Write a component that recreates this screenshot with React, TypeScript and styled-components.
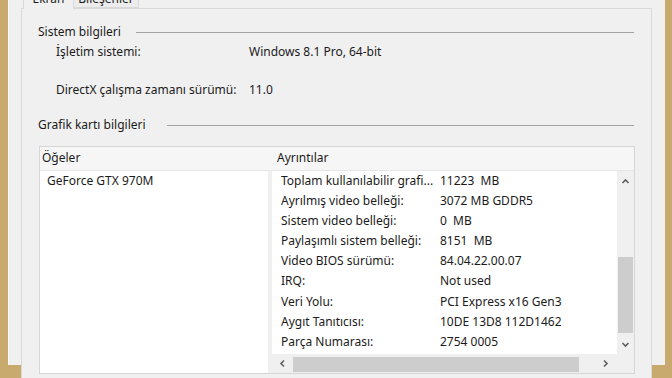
import React from "react";
import styled, { createGlobalStyle } from "styled-components";

const GlobalStyle = createGlobalStyle`
  html, body {
    margin: 0;
    padding: 0;
    background: #c8aa6f;
  }
  * {
    box-sizing: border-box;
  }
`;

const details: [string, string][] = [
  ["Toplam kullanılabilir grafi...", "11223  MB"],
  ["Ayrılmış video belleği:", "3072 MB GDDR5"],
  ["Sistem video belleği:", "0  MB"],
  ["Paylaşımlı sistem belleği:", "8151  MB"],
  ["Video BIOS sürümü:", "84.04.22.00.07"],
  ["IRQ:", "Not used"],
  ["Veri Yolu:", "PCI Express x16 Gen3"],
  ["Aygıt Tanıtıcısı:", "10DE 13D8 112D1462"],
  ["Parça Numarası:", "2754 0005"],
];

function Chevron({ dir }: { dir: "up" | "down" | "left" | "right" }) {
  const rot = { up: 0, right: 90, down: 180, left: 270 }[dir];
  return (
    <svg width="9" height="9" viewBox="0 0 9 9">
      <path
        d="M1.5 6 L4.5 3 L7.5 6"
        fill="none"
        stroke="#5f5f5f"
        strokeWidth="1.6"
        transform={`rotate(${rot} 4.5 4.5)`}
      />
    </svg>
  );
}

function App() {
  return (
    <Frame>
      <GlobalStyle />
      <Window>
        <TabStrip>
          <Tab $active $w={51}>Ekran</Tab>
          <Tab $w={66}>Bileşenler</Tab>
        </TabStrip>
        <Panel>
          <GroupHeader>
            <span>Sistem bilgileri</span>
            <GroupLine $gap={15} />
          </GroupHeader>
          <InfoRow>
            <InfoLabel>İşletim sistemi:</InfoLabel>
            <span>Windows 8.1 Pro, 64-bit</span>
          </InfoRow>
          <InfoRow $top={14}>
            <InfoLabel>DirectX çalışma zamanı sürümü:</InfoLabel>
            <span>11.0</span>
          </InfoRow>
          <GroupHeader $top={15}>
            <span>Grafik kartı bilgileri</span>
            <GroupLine $gap={21} />
          </GroupHeader>

          <ListBox>
            <ListHeader>
              <HeaderCell $pad={2}>Öğeler</HeaderCell>
              <span />
              <HeaderCell $pad={5}>Ayrıntılar</HeaderCell>
            </ListHeader>
            <ListBody>
              <ItemColumn>
                <ItemRow>GeForce GTX 970M</ItemRow>
              </ItemColumn>
              <Splitter />
              <DetailPane>
                <DetailRows>
                  {details.map(([k, v]) => (
                    <DetailRow key={k}>
                      <DetailKey>{k}</DetailKey>
                      <DetailValue>{v}</DetailValue>
                    </DetailRow>
                  ))}
                </DetailRows>
                <VScroll>
                  <ScrollButton $h={20}>
                    <Chevron dir="up" />
                  </ScrollButton>
                  <VTrack>
                    <VThumb />
                  </VTrack>
                  <ScrollButton $h={20}>
                    <Chevron dir="down" />
                  </ScrollButton>
                </VScroll>
                <HScroll>
                  <ScrollButton $w={21}>
                    <Chevron dir="left" />
                  </ScrollButton>
                  <HTrack>
                    <HThumb />
                  </HTrack>
                  <ScrollButton $w={23}>
                    <Chevron dir="right" />
                  </ScrollButton>
                </HScroll>
                <Corner />
              </DetailPane>
            </ListBody>
          </ListBox>
        </Panel>
      </Window>
    </Frame>
  );
}

export default App;

const Frame = styled.div`
  width: 672px;
  height: 378px;
  overflow: hidden;
  background: #c8aa6f;
  padding: 0 7px 0 8px;
`;

const Window = styled.div`
  height: 100%;
  background: #f0f0f0;
  border-left: 1px solid #f8f8f8;
  padding: 0 13px 0 12px;
  font-family: "Noto Sans", "Segoe UI", sans-serif;
  font-size: 12px;
  color: #1b1b1b;
`;

const TabStrip = styled.div`
  display: flex;
  align-items: flex-end;
  height: 21px;
  margin: -13px 0 0 2px;
  position: relative;
  z-index: 1;
`;

const Tab = styled.div<{ $active?: boolean; $w: number }>`
  width: ${(p) => p.$w}px;
  height: ${(p) => (p.$active ? 22 : 21)}px;
  margin-bottom: ${(p) => (p.$active ? -1 : 0)}px;
  margin-left: ${(p) => (p.$active ? 0 : -1)}px;
  padding-top: 3px;
  text-align: center;
  line-height: 16px;
  background: ${(p) => (p.$active ? "#f0f0f0" : "#ececec")};
  border: 1px solid #d9d9d9;
  border-bottom: ${(p) => (p.$active ? "none" : "1px solid #d9d9d9")};
`;

const Panel = styled.div`
  height: 380px;
  border: 1px solid #d9d9d9;
  background: #f0f0f0;
  padding: 0 17px 0 16px;
`;

const GroupHeader = styled.div<{ $top?: number }>`
  display: flex;
  align-items: center;
  height: 16px;
  line-height: 16px;
  margin-top: ${(p) => p.$top ?? 15}px;
`;

const GroupLine = styled.div<{ $gap: number }>`
  flex: 1;
  height: 1px;
  background: #a3a3a3;
  margin-left: ${(p) => p.$gap}px;
`;

const InfoRow = styled.div<{ $top?: number }>`
  display: flex;
  height: 24px;
  line-height: 24px;
  padding-left: 18px;
  margin-top: ${(p) => p.$top ?? 0}px;
`;

const InfoLabel = styled.span`
  width: 193px;
  flex-shrink: 0;
`;

const ListBox = styled.div`
  width: 596px;
  height: 228px;
  margin: 13px 0 0 1px;
  border: 1px solid #d6d6d6;
  background: #f0f0f0;
  display: flex;
  flex-direction: column;
`;

const ListHeader = styled.div`
  display: grid;
  grid-template-columns: 228px 4px 1fr;
  height: 24px;
  line-height: 22px;
  background: #f6f6f6;
  border-bottom: 1px solid #e6e6e6;
`;

const HeaderCell = styled.span<{ $pad: number }>`
  padding-left: ${(p) => p.$pad}px;
`;

const ListBody = styled.div`
  flex: 1;
  display: grid;
  grid-template-columns: 228px 4px 1fr;
  min-height: 0;
`;

const ItemColumn = styled.div`
  background: #ffffff;
`;

const ItemRow = styled.div`
  height: 20px;
  line-height: 20px;
  padding-left: 7px;
`;

const Splitter = styled.div`
  background: #f0f0f0;
`;

const DetailPane = styled.div`
  display: grid;
  grid-template-columns: 1fr 17px;
  grid-template-rows: 183px 1fr;
  background: #ffffff;
`;

const DetailRows = styled.div`
  overflow: hidden;
  padding-left: 9px;
`;

const DetailRow = styled.div`
  display: flex;
  height: 20.1px;
  line-height: 20px;
  white-space: pre;
`;

const DetailKey = styled.span`
  width: 159px;
  flex-shrink: 0;
  overflow: hidden;
`;

const DetailValue = styled.span``;

const VScroll = styled.div`
  display: flex;
  flex-direction: column;
  background: #f0f0f0;
`;

const ScrollButton = styled.div<{ $h?: number; $w?: number }>`
  flex-shrink: 0;
  height: ${(p) => (p.$h ? `${p.$h}px` : "auto")};
  width: ${(p) => (p.$w ? `${p.$w}px` : "auto")};
  display: flex;
  align-items: center;
  justify-content: center;
`;

const VTrack = styled.div`
  flex: 1;
  padding: 66px 1px 0;
`;

const VThumb = styled.div`
  height: 76px;
  background: #cdcdcd;
`;

const HScroll = styled.div`
  display: flex;
  background: #f0f0f0;
`;

const HTrack = styled.div`
  flex: 1;
  padding: 3px 15px 1px 0;
`;

const HThumb = styled.div`
  height: 100%;
  background: #cdcdcd;
`;

const Corner = styled.div`
  background: #f0f0f0;
`;
